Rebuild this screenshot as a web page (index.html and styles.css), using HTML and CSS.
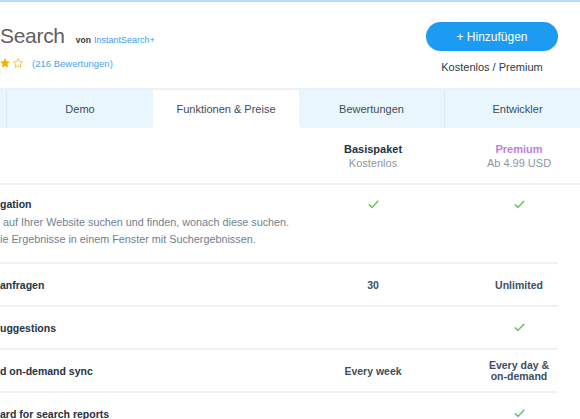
FILE: index.html
```html
<!DOCTYPE html>
<html lang="de">
<head>
<meta charset="utf-8">
<title>InstantSearch+</title>
<link rel="stylesheet" href="styles.css">
</head>
<body>
<div class="page">
  <header class="header">
    <div class="app-info">
      <div class="title-line">
        <span class="title">Search</span>
        <span class="by">von</span>
        <a class="vendor">InstantSearch+</a>
      </div>
      <div class="rating">
        <svg class="star" viewBox="2 2 20 20"><path d="M12 2l3.09 6.26L22 9.27l-5 4.87 1.18 6.88L12 17.77l-6.18 3.25L7 14.14 2 9.27l6.91-1.01L12 2z" fill="#f6b400"/></svg>
        <svg class="star" viewBox="2 2 20 20"><path d="M12 3.4l2.75 5.6 6.2.9-4.48 4.37 1.06 6.17L12 17.54l-5.53 2.9 1.06-6.17L3.05 9.9l6.2-.9L12 3.4z" fill="none" stroke="#f6b400" stroke-width="1.6" stroke-linejoin="round"/></svg>
        <a class="reviews">(216 Bewertungen)</a>
      </div>
    </div>
    <div class="actions">
      <button class="add-btn">+ Hinzufügen</button>
      <div class="pricing-note">Kostenlos / Premium</div>
    </div>
  </header>

  <nav class="tabs">
    <div class="tab"></div>
    <div class="tab before-active">Demo</div>
    <div class="tab active">Funktionen &amp; Preise</div>
    <div class="tab after-active">Bewertungen</div>
    <div class="tab">Entwickler</div>
  </nav>

  <section class="plans">
    <div class="plan-head">
      <div></div>
      <div class="plan">
        <div class="plan-name">Basispaket</div>
        <div class="plan-price">Kostenlos</div>
      </div>
      <div class="plan">
        <div class="plan-name premium">Premium</div>
        <div class="plan-price">Ab 4.99 USD</div>
      </div>
    </div>

    <div class="row row-tall">
      <div class="feature">
        <div class="feature-name">gation</div>
        <div class="feature-desc"> auf Ihrer Website suchen und finden, wonach diese suchen.<br>ie Ergebnisse in einem Fenster mit Suchergebnissen.</div>
      </div>
      <div class="cell top"><svg class="check" viewBox="0 0 12 10"><polyline points="1.2,5.2 4.4,8.2 10.8,1.4" fill="none" stroke="#5cc25e" stroke-width="1.6" stroke-linecap="round" stroke-linejoin="round"/></svg></div>
      <div class="cell top"><svg class="check" viewBox="0 0 12 10"><polyline points="1.2,5.2 4.4,8.2 10.8,1.4" fill="none" stroke="#5cc25e" stroke-width="1.6" stroke-linecap="round" stroke-linejoin="round"/></svg></div>
    </div>

    <div class="row">
      <div class="feature-name">anfragen</div>
      <div class="cell value">30</div>
      <div class="cell value">Unlimited</div>
    </div>

    <div class="row">
      <div class="feature-name">uggestions</div>
      <div class="cell"></div>
      <div class="cell"><svg class="check" viewBox="0 0 12 10"><polyline points="1.2,5.2 4.4,8.2 10.8,1.4" fill="none" stroke="#5cc25e" stroke-width="1.6" stroke-linecap="round" stroke-linejoin="round"/></svg></div>
    </div>

    <div class="row">
      <div class="feature-name">d on-demand sync</div>
      <div class="cell value">Every week</div>
      <div class="cell value two-line">Every day &amp;<br>on-demand</div>
    </div>

    <div class="row">
      <div class="feature-name">ard for search reports</div>
      <div class="cell"></div>
      <div class="cell"><svg class="check" viewBox="0 0 12 10"><polyline points="1.2,5.2 4.4,8.2 10.8,1.4" fill="none" stroke="#5cc25e" stroke-width="1.6" stroke-linecap="round" stroke-linejoin="round"/></svg></div>
    </div>
  </section>
</div>
</body>
</html>
```

FILE: styles.css
```css
html, body {
  margin: 0;
  padding: 0;
  background: #ffffff;
  overflow: hidden;
}

body {
  font-family: "Liberation Sans", Arial, Helvetica, sans-serif;
  color: #2a3744;
}

.page {
  width: 580px;
  height: 419px;
  overflow: hidden;
}

/* Header */
.header {
  border-top: 2px solid #b5daf7;
  border-bottom: 2px solid #eef0f3;
  height: 86px;
  display: flex;
  justify-content: space-between;
  box-sizing: content-box;
}

.app-info {
  padding-top: 19px;
}

.title-line {
  display: flex;
  align-items: baseline;
  height: 30px;
  line-height: 30px;
}

.title {
  font-size: 21px;
  color: #606060;
  letter-spacing: -0.3px;
}

.by {
  font-size: 8.5px;
  font-weight: bold;
  color: #3a3a3a;
  margin-left: 11px;
}

.vendor {
  font-size: 9px;
  color: #3d9df0;
  margin-left: 3px;
}

.rating {
  display: flex;
  align-items: center;
  height: 14px;
  margin-top: 5px;
}

.star {
  width: 10px;
  height: 10px;
}

.star + .star {
  margin-left: 3px;
}

.reviews {
  font-size: 9.5px;
  color: #4aa2ee;
  margin-left: 9px;
}

.actions {
  margin-right: 22px;
  padding-top: 20px;
  display: flex;
  flex-direction: column;
  align-items: center;
  width: 132px;
}

.add-btn {
  width: 132px;
  height: 29px;
  border: none;
  border-radius: 15px;
  background: #1b9cf0;
  color: #ffffff;
  font-family: "Liberation Sans", Arial, sans-serif;
  font-size: 12px;
  padding: 0;
}

.pricing-note {
  margin-top: 9px;
  font-size: 11px;
  line-height: 14px;
  color: #2f3a44;
  white-space: nowrap;
}

/* Tabs */
.tabs {
  display: flex;
  margin-left: -139px;
  height: 38px;
}

.tab {
  flex: 0 0 146px;
  height: 38px;
  line-height: 38px;
  text-align: center;
  font-size: 11px;
  color: #3e4c59;
  background: #eaf6fe;
  border-right: 1px solid #d8eaf8;
  box-sizing: border-box;
}

.tab.before-active {
  border-right: none;
  border-bottom-right-radius: 4px;
}

.tab.active {
  background: #ffffff;
  border-right: none;
}

.tab.after-active {
  border-bottom-left-radius: 4px;
}

/* Plans table */
.plans {
  width: 592px;
}

.plan-head {
  display: grid;
  grid-template-columns: 300px 146px 146px;
  padding: 14px 0 13px;
  border-bottom: 2px solid #eef2f6;
}

.plan {
  text-align: center;
  line-height: 14px;
}

.plan-name {
  font-size: 11px;
  font-weight: bold;
  color: #24313d;
}

.plan-name.premium {
  color: #bb7fe4;
}

.plan-price {
  font-size: 11px;
  color: #8c97a3;
}

.row {
  width: 558px;
  display: grid;
  grid-template-columns: 300px 146px 146px;
  align-items: center;
  height: 41px;
  border-bottom: 2px solid #eef2f6;
}

.row-tall {
  height: auto;
  align-items: start;
  padding: 12px 0 14px;
}

.feature-name {
  font-size: 10.5px;
  font-weight: bold;
  line-height: 14px;
  color: #25323f;
  white-space: nowrap;
}

.feature-desc {
  margin-top: 3px;
  font-size: 10.8px;
  line-height: 17px;
  color: #6f8091;
  white-space: pre;
}

.cell {
  text-align: center;
  line-height: 14px;
  display: flex;
  justify-content: center;
  align-items: center;
}

.cell.top {
  height: 14px;
}

.value {
  font-size: 10.5px;
  font-weight: bold;
  color: #3d4e5f;
}

.two-line {
  line-height: 11px;
}

.check {
  width: 11px;
  height: 9px;
}
```
